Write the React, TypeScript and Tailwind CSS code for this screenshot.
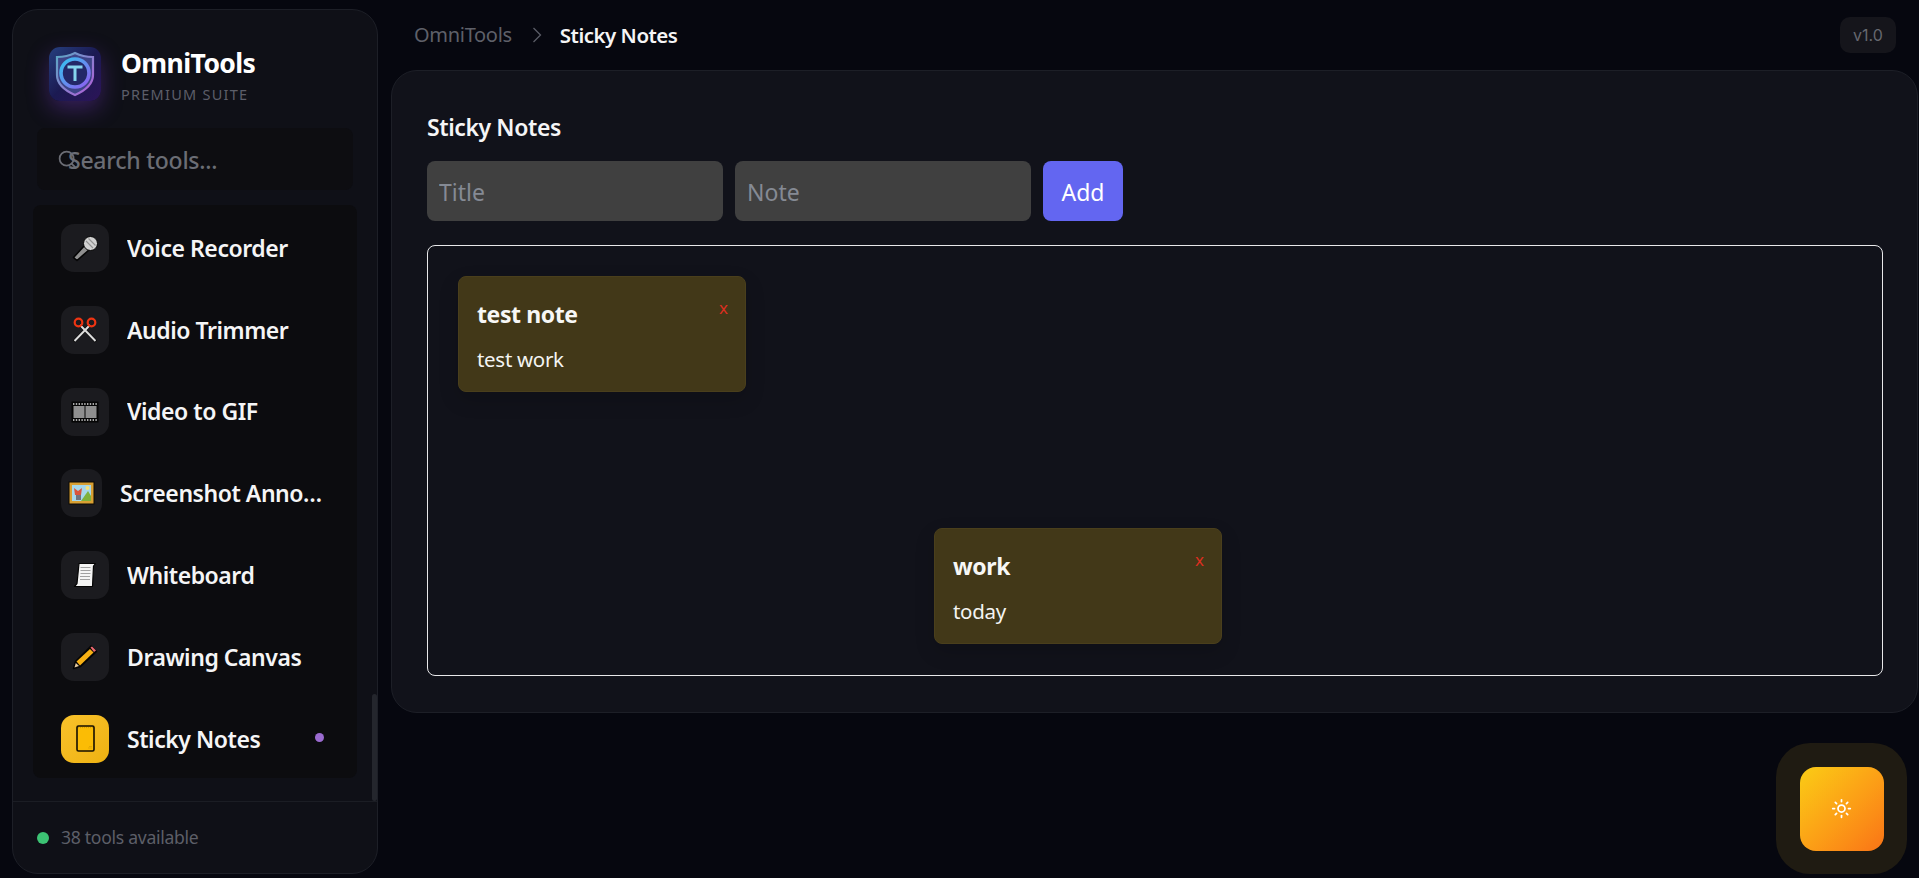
import React from 'react';
import { Search, Sun } from 'lucide-react';

const MicIcon = () => (
  <svg width="27" height="27" viewBox="0 0 27 27">
    <path d="M1.5 22.5 L13 10 L17.5 14.5 L5 25.5 Z" fill="#8f8f8f" stroke="#050505" strokeWidth="1.6" strokeLinejoin="round" />
    <circle cx="18.5" cy="8.5" r="7" fill="#d2d2d2" stroke="#050505" strokeWidth="1" />
    <path d="M14 6 L21 13 M16.5 3.5 L23.5 10.5" stroke="#939393" strokeWidth="1.1" />
  </svg>
);

const ScissorsIcon = () => (
  <svg width="26" height="26" viewBox="0 0 26 26" fill="none">
    <path d="M8 8 L24 24.5 M18 8 L2 24.5" stroke="#050505" strokeWidth="3.2" />
    <path d="M8 8 L23.5 24 M18 8 L2.5 24" stroke="#dcdcdc" strokeWidth="2" />
    <circle cx="6.5" cy="5.5" r="3.8" stroke="#ee3412" strokeWidth="2.2" />
    <circle cx="19.5" cy="5.5" r="3.8" stroke="#ee3412" strokeWidth="2.2" />
  </svg>
);

const FilmIcon = () => (
  <svg width="28" height="22" viewBox="0 0 28 22">
    <rect x="0.5" y="0.5" width="27" height="21" fill="#050505" />
    <rect x="2.5" y="5" width="11" height="12" fill="#8f8f8f" />
    <rect x="14.5" y="5" width="11" height="12" fill="#8f8f8f" />
    <path d="M2 3 H26 M2 19 H26" stroke="#e0e0e0" strokeWidth="1.3" strokeDasharray="1.4 1.4" />
  </svg>
);

const PictureIcon = () => (
  <svg width="27" height="24" viewBox="0 0 27 24">
    <rect x="0.5" y="0.5" width="26" height="23" fill="#0d0a04" />
    <rect x="1.5" y="1.5" width="24" height="21" fill="#d9a033" />
    <rect x="4" y="4" width="19" height="16" fill="#a6d8ec" />
    <circle cx="19.5" cy="7" r="2" fill="#f8e27a" />
    <path d="M13 20 L20 10 L23 15 L23 20 Z" fill="#7fb23c" />
    <path d="M6 7 L10 10 L14 7 L13 14 L7 14 Z" fill="#d9553c" />
    <path d="M8 14 H13 V19 H8 Z" fill="#6f7480" />
  </svg>
);

const ScrollIcon = () => (
  <svg width="24" height="26" viewBox="0 0 24 26">
    <path d="M6 1.5 H22.5 L20.5 4 L19.5 24.5 H1.5 L4 21.5 Z" fill="#f4f4f4" stroke="#050505" strokeWidth="1.2" strokeLinejoin="round" />
    <path d="M7.5 5.5 H17.5 M7.5 8.5 H17.5 M7.5 11.5 H17.5 M7 14.5 H17 M7 17.5 H17" stroke="#a0a0a0" strokeWidth="1" />
  </svg>
);

const PencilIcon = () => (
  <svg width="26" height="26" viewBox="0 0 26 26">
    <path d="M1.5 24.5 L3.5 17.5 L19 2 L24.5 7.5 L8.5 22.5 Z" fill="#050505" stroke="#050505" strokeWidth="1.5" strokeLinejoin="round" />
    <path d="M4.5 17.5 L18 5 L21.5 8.5 L8 21.5 Z" fill="#f7b014" />
    <path d="M18.5 3.5 L20 2.5 L24 6.5 L22 8 Z" fill="#ee6a72" />
    <path d="M2.5 23.5 L3.8 19 L7 22 Z" fill="#e4c9a0" />
  </svg>
);

const NotepadIcon = () => (
  <svg width="19" height="27" viewBox="0 0 19 27">
    <rect x="1" y="1" width="17" height="25" rx="1.5" fill="#fbbc05" stroke="#140e02" strokeWidth="1.6" />
    <path d="M2 2.6 H17" stroke="#d69a04" strokeWidth="1" strokeDasharray="1 1" />
    <path d="M12 23 H16 M13 21.5 H16" stroke="#e0a404" strokeWidth="0.8" />
  </svg>
);

const LogoIcon = () => (
  <svg width="52" height="54" viewBox="0 0 52 54">
    <defs>
      <linearGradient id="logoBg" x1="0" y1="0" x2="1" y2="1">
        <stop offset="0" stopColor="#26407f" />
        <stop offset="0.5" stopColor="#1b1a52" />
        <stop offset="1" stopColor="#2c1458" />
      </linearGradient>
      <linearGradient id="shieldStroke" x1="0" y1="0" x2="1" y2="1">
        <stop offset="0" stopColor="#5aa8c4" />
        <stop offset="1" stopColor="#b45cd8" />
      </linearGradient>
      <linearGradient id="ringStroke" x1="0" y1="0" x2="1" y2="1">
        <stop offset="0" stopColor="#35c4f0" />
        <stop offset="1" stopColor="#8f5cf0" />
      </linearGradient>
    </defs>
    <rect width="52" height="54" rx="11" fill="url(#logoBg)" />
    <path d="M26 6 C32 9 38 10 44 10 V28 C44 37 35 44 26 48 C17 44 8 37 8 28 V10 C14 10 20 9 26 6 Z" fill="#3d4488" stroke="url(#shieldStroke)" strokeWidth="2.2" />
    <circle cx="26" cy="26" r="14" fill="#232868" stroke="url(#ringStroke)" strokeWidth="3.6" />
    <path d="M18.5 20 H33.5 M26 20 V34" stroke="#86d4ee" strokeWidth="3" />
  </svg>
);

const tools = [
  { name: 'Voice Recorder', icon: <MicIcon /> },
  { name: 'Audio Trimmer', icon: <ScissorsIcon /> },
  { name: 'Video to GIF', icon: <FilmIcon /> },
  { name: 'Screenshot Annotator', icon: <PictureIcon />, squeezed: true },
  { name: 'Whiteboard', icon: <ScrollIcon /> },
  { name: 'Drawing Canvas', icon: <PencilIcon /> },
  { name: 'Sticky Notes', icon: <NotepadIcon />, active: true },
];

const ToolItem = ({ name, icon, squeezed, active }: { name: string; icon: React.ReactNode; squeezed?: boolean; active?: boolean }) => (
  <div className={`flex items-center gap-[18px] ${squeezed ? 'pr-[32px]' : 'pr-[22px]'}`}>
    <div
      className={`flex h-12 shrink-0 items-center justify-center rounded-[13px] ${squeezed ? 'w-[41px]' : 'w-12'} ${
        active ? 'bg-gradient-to-br from-[#f9c22a] to-[#eeb210]' : 'bg-[#1b1b1f]'
      }`}
    >
      {icon}
    </div>
    <span className="min-w-0 flex-1 truncate text-[23px] font-semibold tracking-[-0.45px] text-[#f5f5f6]">{name}</span>
    {active && <span className="ml-2 mr-[11px] h-[9px] w-[9px] -translate-y-[1px] rounded-full bg-[#9b6bd0]" />}
  </div>
);

const Sidebar = () => (
  <aside className="relative ml-3 mt-[9px] flex h-[865px] w-[366px] shrink-0 flex-col rounded-[26px] border border-[#1d1f27] bg-[#0f1017]">
    <div className="mt-[37px] flex h-[54px] items-center gap-5 pl-[36px]">
      <div className="rounded-[11px] shadow-[0_8px_22px_rgba(130,60,220,0.35)]">
        <LogoIcon />
      </div>
      <div className="flex flex-col">
        <span className="text-[26.5px] font-bold leading-[34px] tracking-[-0.6px] text-white">OmniTools</span>
        <span className="mt-[5px] text-[14.5px] leading-[18px] tracking-[1.25px] text-[#5c5e69]">PREMIUM SUITE</span>
      </div>
    </div>

    <div className="relative mx-6 mt-[27px] h-[62px] rounded-lg bg-[#0d0d11]">
      <Search className="absolute left-5 top-[21px] text-[#6b6d75]" size={21} strokeWidth={2} />
      <input
        placeholder="Search tools..."
        className="h-full w-full bg-transparent pl-[31px] pt-[2px] text-[23px] font-medium tracking-[-0.25px] text-white outline-none placeholder:text-[#6b6d75]"
      />
    </div>

    <div className="mx-5 mt-[15px] flex h-[573px] flex-col gap-[33.8px] overflow-hidden rounded-lg bg-[#0c0c0f] pl-7 pt-[19px]">
      {tools.map((tool) => (
        <ToolItem key={tool.name} {...tool} />
      ))}
    </div>

    <div className="absolute right-0 top-[684px] h-[107px] w-[5px] rounded-full bg-[#24262d]" />

    <div className="mt-[23px] flex flex-1 items-center gap-3 border-t border-[#1b1d24] pl-6">
      <span className="h-3 w-3 rounded-full bg-[#3cc374]" />
      <span className="text-[17.6px] tracking-[-0.3px] text-[#5d5f68]">38 tools available</span>
    </div>
  </aside>
);

const Note = ({ title, body, className }: { title: string; body: string; className: string }) => (
  <div className={`absolute h-[116px] w-[288px] rounded-lg border border-[#4a3f1c] bg-[#423818] px-[18px] pt-[22px] shadow-[0_8px_20px_rgba(0,0,0,0.15)] ${className}`}>
    <div className="flex items-start justify-between">
      <span className="text-[23px] font-bold leading-[30px] tracking-[-0.4px] text-[#f7f7f5]">{title}</span>
      <span className="-mr-[1px] -mt-[3px] text-[17px] leading-[24px] text-[#dc2f20]">x</span>
    </div>
    <p className="mt-4 text-[20.5px] leading-[28px] tracking-[-0.3px] text-[#f4f4f2]">{body}</p>
  </div>
);

export default function App() {
  return (
    <div className="relative flex h-[878px] w-full overflow-hidden bg-[#06070f] font-['Noto_Sans',sans-serif]">
      <Sidebar />

      <main className="ml-[13px] flex min-w-0 flex-1 flex-col">
        <header className="flex h-[70px] shrink-0 items-center pl-[23px] pr-[23px]">
          <span className="text-[20px] tracking-[-0.3px] text-[#5e6069]">OmniTools</span>
          <svg className="ml-5 mr-[18px]" width="10" height="16" viewBox="0 0 10 16" fill="none">
            <path d="M1.5 1 L8.5 8 L1.5 15" stroke="#5a5c66" strokeWidth="1.3" />
          </svg>
          <span className="text-[20.5px] font-semibold tracking-[-0.5px] text-[#f5f5f6]">Sticky Notes</span>
          <span className="ml-auto flex h-9 w-14 items-center justify-center rounded-[10px] bg-[#15151b] font-['Inter',sans-serif] text-[16px] text-[#66686f]">
            v1.0
          </span>
        </header>

        <section className="mr-px h-[643px] rounded-[26px] border border-[#1d1f27] bg-[#11121a] pl-[35px] pr-[34px] pt-[41px]">
          <h1 className="text-[23px] font-semibold leading-[30px] tracking-[-0.4px] text-[#f5f5f6]">Sticky Notes</h1>

          <div className="mt-[19px] flex gap-3">
            <input
              placeholder="Title"
              className="h-[60px] w-[296px] rounded-lg bg-[#404040] px-3 pt-[2px] text-[23px] text-white outline-none placeholder:text-[#858a94]"
            />
            <input
              placeholder="Note"
              className="h-[60px] w-[296px] rounded-lg bg-[#404040] px-3 pt-[2px] text-[23px] text-white outline-none placeholder:text-[#858a94]"
            />
            <button className="h-[60px] w-20 rounded-lg bg-[#6366f1] pt-[2px] text-[23px] text-white">Add</button>
          </div>

          <div className="relative mt-6 h-[431px] rounded-lg border border-[#e8e8ea]">
            <Note title="test note" body="test work" className="left-[30px] top-[30px]" />
            <Note title="work" body="today" className="left-[506px] top-[282px]" />
          </div>
        </section>
      </main>

      <div className="absolute left-[1776px] top-[743px] flex h-[131px] w-[131px] items-center justify-center rounded-[34px] bg-[#1f1b12]">
        <button className="flex h-[84px] w-[84px] items-center justify-center rounded-2xl bg-gradient-to-br from-[#facc15] to-[#f97316] text-white">
          <Sun size={21} strokeWidth={2} />
        </button>
      </div>
    </div>
  );
}
